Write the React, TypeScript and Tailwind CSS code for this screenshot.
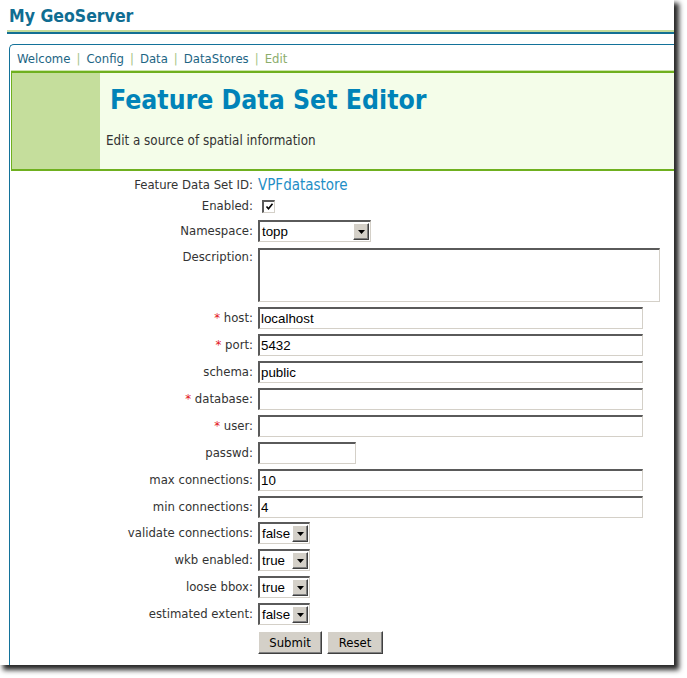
import React from "react";

const ui = "font-['DejaVu_Sans_Condensed','DejaVu_Sans',sans-serif] [font-stretch:condensed]";
const fieldFont = "font-['Liberation_Sans',Arial,sans-serif] text-[13.33px] text-black";
const inset =
    "border-t-2 border-l-2 border-r border-b border-t-[#5a5a5a] border-l-[#5a5a5a] border-r-[#d4d0c8] border-b-[#d4d0c8] bg-white";

interface RowProps {
    label: string;
    required?: boolean;
    top?: boolean;
    className: string;
    children: React.ReactNode;
}

const Row: React.FC<RowProps> = ({ label, required, top, className, children }) => (
    <div className={`flex ${top ? "items-start" : "items-center"} ${className}`}>
        <div className={`w-[243px] shrink-0 text-right text-[13px] leading-[16px] text-[#333] ${top ? "pt-[1px]" : ""}`}>
            {required && <span className="text-[#e3141b]">* </span>}
            {label}:
        </div>
        <div className="ml-[5px] flex h-full items-center">{children}</div>
    </div>
);

const TextInput = ({ value = "", width = "w-[385px]" }: { value?: string; width?: string }) => (
    <input
        readOnly
        defaultValue={value}
        className={`${width} h-[22px] ${inset} ${fieldFont} pl-[1px] outline-none`}
    />
);

const Select = ({ value, width }: { value: string; width: string }) => (
    <div className={`${width} h-[22px] flex items-center ${inset}`}>
        <span className={`flex-1 pl-[2px] leading-none ${fieldFont}`}>{value}</span>
        <span className="mr-[1px] flex h-[17px] w-[16px] items-center justify-center border border-t-white border-l-white border-r-[#404040] border-b-[#404040] bg-[#d4d0c8] shadow-[inset_-1px_-1px_0_#808080]">
            <svg width="7" height="4" viewBox="0 0 7 4">
                <path d="M0 0h7L3.5 4z" fill="#000" />
            </svg>
        </span>
    </div>
);

const Button = ({ label, width }: { label: string; width: string }) => (
    <button
        className={`${width} h-[23px] border border-t-white border-l-white border-r-[#404040] border-b-[#404040] bg-[#d4d0c8] shadow-[inset_-1px_-1px_0_#808080] text-[13px] text-black`}
    >
        {label}
    </button>
);

const NavSep = () => <span className="mx-[6px] text-[#a5c487]">|</span>;

export default function App() {
    return (
        <div className={`min-h-screen bg-white ${ui}`}>
            <div className="relative h-[665px] w-[674px] overflow-hidden bg-white shadow-[4px_4px_5px_1px_rgba(0,0,0,0.85)]">
                {/* header */}
                <div className="pl-[9px] pt-[6px] text-[17.5px] font-bold leading-[20px] text-[#106d92]">
                    My GeoServer
                </div>
                <div className="ml-[7px] mt-[4px] h-[2px] bg-[#c3da9b]" />
                <div className="ml-[7px] h-[2px] bg-[#136f94]" />

                {/* main box */}
                <div className="ml-[9px] mt-[10px] w-[700px] rounded-tl-[5px] border-l border-t border-[#13729a] pb-[40px]">
                    <nav className="pl-[7px] pt-[6px] text-[13px] leading-[16px] text-[#1d6584]">
                        <span>Welcome</span>
                        <NavSep />
                        <span>Config</span>
                        <NavSep />
                        <span>Data</span>
                        <NavSep />
                        <span>DataStores</span>
                        <NavSep />
                        <span className="text-[#8cad6c]">Edit</span>
                    </nav>

                    {/* banner */}
                    <div className="ml-[1px] mt-[3px] h-[1px] bg-[#cde3ab]" />
                    <div className="ml-[1px] flex h-[100px] border-y-2 border-l border-t-[#6fb01f] border-b-[#6fb01f] border-l-[#6fb01f] bg-[#f4fde9]">
                        <div className="w-[88px] bg-[#c5de9c]" />
                        <div className="flex-1">
                            <h1 className="pl-[10px] pt-[12px] text-[26.4px] font-bold leading-[30px] text-[#0083b8]">
                                Feature Data Set Editor
                            </h1>
                            <p className="mt-[18px] pl-[6px] text-[13.3px] leading-[16px] text-[#333]">
                                Edit a source of spatial information
                            </p>
                        </div>
                    </div>

                    {/* form */}
                    <form>
                        <Row label="Feature Data Set ID" className="mt-[5px] h-[18px]">
                            <span className="text-[15px] leading-[18px] text-[#1f8ec6]">VPFdatastore</span>
                        </Row>
                        <Row label="Enabled" className="mt-[4px] h-[16px]">
                            <span className={`ml-[4px] flex h-[13px] w-[13px] items-center justify-center ${inset}`}>
                                <svg width="9" height="9" viewBox="0 0 9 9">
                                    <path d="M1.5 4.5l2 2.2L7.5 1.8" stroke="#000" strokeWidth="1.6" fill="none" />
                                </svg>
                            </span>
                        </Row>
                        <Row label="Namespace" className="mt-[6px] h-[22px]">
                            <Select value="topp" width="w-[113px]" />
                        </Row>
                        <Row label="Description" top className="mt-[6px] h-[54px]">
                            <textarea readOnly className={`h-[54px] w-[402px] resize-none ${inset} outline-none`} />
                        </Row>
                        <Row label="host" required className="mt-[5px] h-[22px]">
                            <TextInput value="localhost" />
                        </Row>
                        <Row label="port" required className="mt-[5px] h-[22px]">
                            <TextInput value="5432" />
                        </Row>
                        <Row label="schema" className="mt-[5px] h-[22px]">
                            <TextInput value="public" />
                        </Row>
                        <Row label="database" required className="mt-[5px] h-[22px]">
                            <TextInput />
                        </Row>
                        <Row label="user" required className="mt-[5px] h-[22px]">
                            <TextInput />
                        </Row>
                        <Row label="passwd" className="mt-[5px] h-[22px]">
                            <TextInput width="w-[98px]" />
                        </Row>
                        <Row label="max connections" className="mt-[5px] h-[22px]">
                            <TextInput value="10" />
                        </Row>
                        <Row label="min connections" className="mt-[5px] h-[22px]">
                            <TextInput value="4" />
                        </Row>
                        <Row label="validate connections" className="mt-[4px] h-[22px]">
                            <Select value="false" width="w-[52px]" />
                        </Row>
                        <Row label="wkb enabled" className="mt-[5px] h-[22px]">
                            <Select value="true" width="w-[52px]" />
                        </Row>
                        <Row label="loose bbox" className="mt-[5px] h-[22px]">
                            <Select value="true" width="w-[52px]" />
                        </Row>
                        <Row label="estimated extent" className="mt-[5px] h-[22px]">
                            <Select value="false" width="w-[52px]" />
                        </Row>
                        <div className="mt-[6px] flex gap-[5px] pl-[248px]">
                            <Button label="Submit" width="w-[64px]" />
                            <Button label="Reset" width="w-[56px]" />
                        </div>
                    </form>
                </div>
            </div>
        </div>
    );
}
